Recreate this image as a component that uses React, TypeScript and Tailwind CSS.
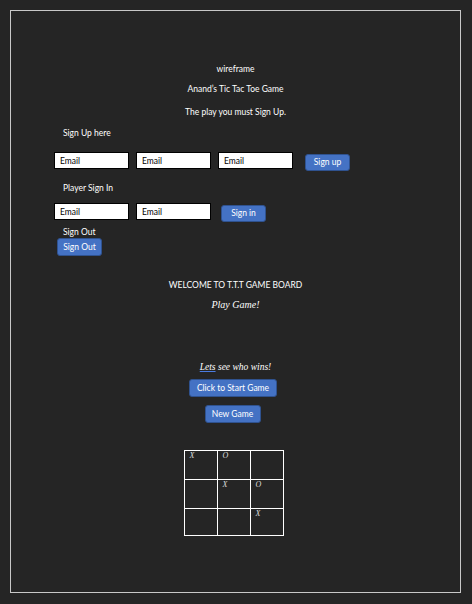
const sans = { fontFamily: 'Lato, "Open Sans", sans-serif' };

const Field = () => (
  <div className="w-[75px] h-[17px] bg-white border border-black flex items-center pl-[5px] text-[8.5px] text-black">
    Email
  </div>
);

const Btn = ({ label, w, className = '' }: { label: string; w: string; className?: string }) => (
  <button
    className={`${w} h-[17px] bg-[#4472c4] border border-[#2f528f] rounded-[3px] text-white text-[8.5px] leading-none flex items-center justify-center ${className}`}
  >
    {label}
  </button>
);

const board = [
  ['X', 'O', ''],
  ['', 'X', 'O'],
  ['', '', 'X'],
];

export default function App() {
  return (
    <div className="w-[472px] h-[604px] bg-[#252525] p-[10px]" style={sans}>
      <div className="w-[451px] h-[583px] border border-[#c8c8c8] flex flex-col text-[8.5px] leading-[12px] text-white">
        <p className="mt-[52px] text-center">wireframe</p>
        <p className="mt-[8px] text-center">Anand&rsquo;s Tic Tac Toe Game</p>
        <p className="mt-[11px] text-center">The play you must Sign Up.</p>

        <p className="mt-[9px] pl-[52px]">Sign Up here</p>
        <div className="mt-[13px] ml-[43px] flex items-start gap-[7px]">
          <Field />
          <Field />
          <Field />
          <Btn label="Sign up" w="w-[45px]" className="ml-[5px] mt-[2px] h-[16px]" />
        </div>

        <p className="mt-[11px] pl-[52px]">Player Sign In</p>
        <div className="mt-[9px] ml-[43px] flex items-start gap-[7px]">
          <Field />
          <Field />
          <Btn label="Sign in" w="w-[45px]" className="ml-[3px] mt-[2px]" />
        </div>

        <p className="mt-[4px] pl-[52px]">Sign Out</p>
        <Btn label="Sign Out" w="w-[45px]" className="ml-[46px] h-[18px]" />

        <p className="mt-[23px] text-center">WELCOME TO T.T.T GAME BOARD</p>
        <p
          className="mt-[8px] text-center italic text-[10px]"
          style={{ fontFamily: '"Liberation Serif", serif' }}
        >
          Play Game!
        </p>

        <p
          className="mt-[50px] text-center italic text-[9.5px]"
          style={{ fontFamily: '"Liberation Serif", serif' }}
        >
          <span className="underline decoration-[#4a7be0]">Lets</span> see who wins!
        </p>
        <div className="mt-[6px] flex justify-center pr-[5px]">
          <Btn label="Click to Start Game" w="w-[88px]" className="h-[18px]" />
        </div>
        <div className="mt-[8px] flex justify-center pr-[6px]">
          <Btn label="New Game" w="w-[56px]" className="h-[18px]" />
        </div>

        <div className="mt-[27px] self-center ml-[-4px] grid grid-cols-[33px_33px_33px] grid-rows-[29px_29px_27px] border-l border-t border-white">
          {board.flat().map((v, i) => (
            <div
              key={i}
              className="border-r border-b border-white pl-[5px] italic text-[8px] leading-[9px] text-[#dcdcdc]"
              style={{ fontFamily: '"Liberation Serif", serif' }}
            >
              {v}
            </div>
          ))}
        </div>
      </div>
    </div>
  );
}
